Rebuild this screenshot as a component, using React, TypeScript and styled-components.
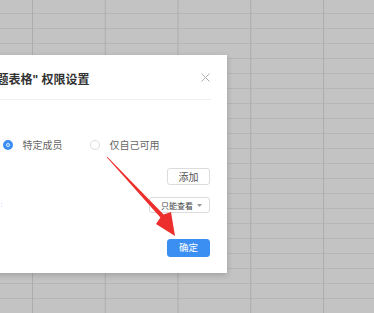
import React from "react";
import styled, { createGlobalStyle } from "styled-components";

const Global = createGlobalStyle`
  html, body {
    margin: 0;
    padding: 0;
    width: 374px;
    height: 313px;
    overflow: hidden;
  }
  body {
    background-color: #c3c3c3;
    background-image:
      linear-gradient(to right, #adadad 1px, transparent 1px),
      linear-gradient(to bottom, #b6b6b6 1px, transparent 1px);
    background-size: 72.75px 100%, 100% 15px;
    background-position: 32px 0, 0 13px;
    font-family: "Liberation Sans", "Noto Sans CJK SC", sans-serif;
  }
`;

const Sheet = styled.div`
  position: relative;
  width: 374px;
  height: 313px;
`;

const Dialog = styled.div`
  position: absolute;
  left: -37px;
  top: 55px;
  width: 264px;
  height: 218px;
  box-sizing: border-box;
  padding: 0 16px 0 16px;
  background: #fff;
  box-shadow: 0 2px 6px rgba(0, 0, 0, 0.18);
  display: flex;
  flex-direction: column;
`;

const Header = styled.div`
  height: 44px;
  display: flex;
  align-items: center;
  justify-content: space-between;
  border-bottom: 1px solid #efefef;
`;

const Title = styled.div`
  font-size: 12px;
  font-weight: 700;
  color: #333;
  white-space: nowrap;
  margin-left: -0.3px;
  padding-top: 2px;
`;

const Close = styled.button`
  border: 0;
  background: none;
  padding: 0;
  margin-right: 1px;
  width: 9px;
  height: 9px;
  display: flex;
  cursor: pointer;
`;

const Row = styled.div<{ $mt: number; $end?: boolean }>`
  margin-top: ${(p) => p.$mt}px;
  display: flex;
  align-items: center;
  justify-content: ${(p) => (p.$end ? "flex-end" : "flex-start")};
  padding-right: 1px;
`;

const RadioGroup = styled.div`
  display: flex;
  align-items: center;
  margin-left: 23.5px;
  height: 12px;
`;

const RadioItem = styled.label`
  display: flex;
  align-items: center;
  gap: 10px;
  margin-right: 27px;
  font-size: 10px;
  line-height: 12px;
  color: #666;
  font-family: "Noto Sans CJK SC", sans-serif;
`;

const RadioDot = styled.span<{ $on?: boolean }>`
  width: 10px;
  height: 10px;
  box-sizing: border-box;
  border-radius: 50%;
  border: ${(p) => (p.$on ? "3px solid #3b8ff3" : "1px solid #dcdcdc")};
  background: ${(p) => (p.$on ? "#3b8ff3" : "#fff")};
  box-shadow: ${(p) => (p.$on ? "inset 0 0 0 1px #fff" : "none")};
  flex-shrink: 0;
`;

const Button = styled.button<{ $primary?: boolean; $h: number }>`
  width: 43px;
  height: ${(p) => p.$h}px;
  padding: 0;
  border-radius: 3px;
  border: 1px solid ${(p) => (p.$primary ? "#3b8ff3" : "#dcdcdc")};
  background: ${(p) => (p.$primary ? "#3b8ff3" : "#fff")};
  color: ${(p) => (p.$primary ? "#fff" : "#555")};
  font-family: "Noto Sans CJK SC", sans-serif;
  font-size: ${(p) => (p.$primary ? 9.5 : 10)}px;
  line-height: 1;
  display: flex;
  align-items: center;
  justify-content: center;
`;

const SpreadRow = styled(Row)`
  justify-content: space-between;
`;

const LinkStub = styled.span`
  font-family: "Liberation Sans", sans-serif;
  font-size: 8px;
  line-height: 8px;
  color: #a9c9f3;
  margin-left: 21.5px;
`;

const Select = styled.div`
  width: 61px;
  height: 16px;
  box-sizing: border-box;
  border: 1px solid #dcdcdc;
  border-radius: 3px;
  display: flex;
  align-items: center;
  justify-content: flex-end;
  gap: 4px;
  padding-right: 7px;
  font-family: "Noto Sans CJK SC", sans-serif;
  font-size: 8px;
  color: #444;
`;

const ArrowLayer = styled.svg`
  position: absolute;
  left: 0;
  top: 0;
  pointer-events: none;
`;

export default function App() {
  return (
    <>
      <Global />
      <Sheet>
        <Dialog>
          <Header>
            <Title>"主题表格" 权限设置</Title>
            <Close aria-label="关闭">
              <svg width="9" height="9" viewBox="0 0 9 9">
                <path d="M0.5 0.5 L8.5 8.5 M8.5 0.5 L0.5 8.5" stroke="#b0b0b0" strokeWidth="1" />
              </svg>
            </Close>
          </Header>
          <Row $mt={39}>
            <RadioGroup>
              <RadioItem>
                <RadioDot $on />
                特定成员
              </RadioItem>
              <RadioItem>
                <RadioDot />
                仅自己可用
              </RadioItem>
            </RadioGroup>
          </Row>
          <Row $mt={17} $end>
            <Button $h={17}>添加</Button>
          </Row>
          <SpreadRow $mt={12}>
            <LinkStub>:</LinkStub>
            <Select>
              只能查看
              <svg width="5" height="3" viewBox="0 0 5 3">
                <path d="M0 0 L5 0 L2.5 3 Z" fill="#999" />
              </svg>
            </Select>
          </SpreadRow>
          <Row $mt={26} $end>
            <Button $primary $h={18}>确定</Button>
          </Row>
        </Dialog>
        <ArrowLayer width="374" height="313" viewBox="0 0 374 313">
          <polygon
            points="106.7,157.3 107.3,156.7 163.6,214.5 171,212 175,236 156,224 160.4,217.5"
            fill="#ec2f2c"
          />
        </ArrowLayer>
      </Sheet>
    </>
  );
}
